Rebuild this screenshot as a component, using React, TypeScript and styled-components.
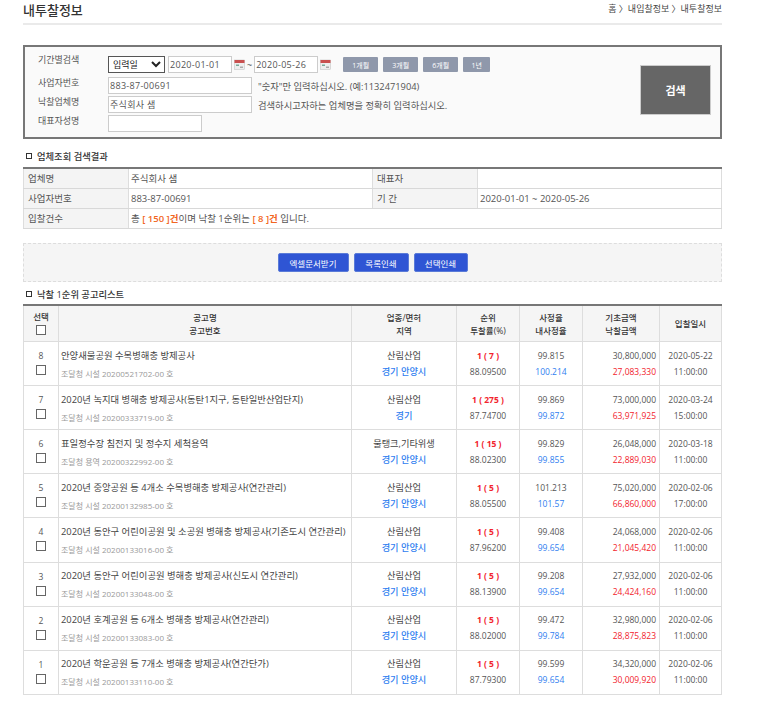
import React from "react";
import styled, { createGlobalStyle } from "styled-components";

const GlobalStyle = createGlobalStyle`
    html, body {
        margin: 0;
        padding: 0;
        background: #fff;
    }
    body {
        font-family: "Open Sans", "Noto Sans CJK KR", sans-serif;
        font-size: 9px;
        color: #555;
    }
`;

const Page = styled.div`
    width: 699px;
    margin-left: 23px;
    height: 707px;
    overflow: hidden;
`;

const Header = styled.header`
    display: flex;
    justify-content: space-between;
    align-items: flex-start;
    height: 23px;
    border-bottom: 2px solid #eaeaea;
`;

const Title = styled.h1`
    margin: 0;
    padding-top: 1px;
    font-size: 13px;
    line-height: 18px;
    font-weight: 500;
    color: #333;
`;

const Crumbs = styled.div`
    font-size: 9px;
    line-height: 18px;
    color: #444;
`;

const SearchBox = styled.form`
    display: flex;
    justify-content: space-between;
    height: 94px;
    box-sizing: border-box;
    margin-top: 20px;
    border: 2px solid #777;
    background: #fafafa;
    padding: 6px 9px 0 13px;
`;

const SearchFields = styled.div`
    display: grid;
    grid-template-columns: 70px 1fr;
    grid-template-rows: 23px 19px 19px 19px;
    align-items: center;
`;

const FieldLabel = styled.label`
    font-size: 9px;
    color: #555;
    margin-bottom: 7px;

    &:first-child {
        margin-bottom: 11px;
    }
`;

const FieldRow = styled.div`
    display: flex;
    align-items: center;
    gap: 6px;
    font-size: 9.3px;
    color: #555;
`;

const PeriodRow = styled(FieldRow)`
    gap: 3px;
`;

const Select = styled.select`
    width: 57px;
    height: 17px;
    padding: 0;
    font-family: inherit;
    font-size: 9px;
    color: #222;
    background: #fff;
    border: 1px solid #555;
`;

const TextInput = styled.input<{ $w: number }>`
    width: ${(p) => p.$w}px;
    height: 17px;
    box-sizing: border-box;
    padding: 0 1px;
    font-family: inherit;
    font-size: 9px;
    letter-spacing: 0.3px;
    color: #555;
    background: #fff;
    border: 1px solid #ccc;
`;

const DateGroup = styled.div`
    display: flex;
    align-items: center;
    gap: 2px;
    font-size: 9px;
`;

const PeriodButtons = styled.div`
    display: flex;
    gap: 5px;
    margin-left: 9px;
`;

const PeriodButton = styled.button<{ $w: number }>`
    width: ${(p) => p.$w}px;
    height: 15px;
    padding: 0;
    border: 0;
    border-radius: 1px;
    background: #8f98ab;
    color: #fff;
    font-family: inherit;
    font-size: 7px;
`;

const SearchButton = styled.button`
    width: 71px;
    height: 50px;
    margin-top: 12px;
    padding: 0;
    border: 1px solid #ccc;
    background: #666;
    color: #fff;
    font-family: inherit;
    font-size: 11px;
    font-weight: 700;
`;

const SectionTitle = styled.h2<{ $top: number }>`
    display: flex;
    align-items: center;
    gap: 5px;
    margin: ${(p) => p.$top}px 0 0 3px;
    height: 13px;
    font-size: 9.3px;
    font-weight: 500;
    color: #333;

    &::before {
        content: "";
        width: 4px;
        height: 4px;
        border: 1px solid #333;
        background: #fff;
    }
`;

const InfoTable = styled.table`
    width: 699px;
    height: 62px;
    margin-top: 5px;
    table-layout: fixed;
    border-collapse: collapse;
    border-top: 2px solid #777;
    border-left: 1px solid #ddd;
    border-right: 1px solid #ddd;
    font-size: 9.5px;
    line-height: 12px;

    th, td {
        height: 19px;
        padding: 0 2px;
        border-bottom: 1px solid #d8d8d8;
        border-right: 1px solid #ddd;
        text-align: left;
        font-weight: 400;
        color: #555;
    }
    th {
        padding: 0 4px;
        background: #f4f4f4;
    }
`;

const Hot = styled.span`
    color: #f26522;
    font-weight: 600;
`;

const ButtonBar = styled.div`
    display: flex;
    justify-content: center;
    gap: 5px;
    height: 39px;
    box-sizing: border-box;
    margin-top: 14px;
    padding-top: 9px;
    border: 1px dashed #ddd;
    background: #f5f5f5;
`;

const BlueButton = styled.button<{ $w: number }>`
    width: ${(p) => p.$w}px;
    height: 19px;
    padding: 0;
    border: 1px solid #5a7bd8;
    border-radius: 2px;
    background: #2f55d4;
    color: #fff;
    font-family: inherit;
    font-size: 8.5px;
`;

const ListTable = styled.table`
    width: 699px;
    margin-top: 4px;
    table-layout: fixed;
    border-collapse: collapse;
    border-top: 2px solid #777;
    border-left: 1px solid #ddd;
    border-bottom: 1px solid #ddd;
    font-size: 8.5px;
    line-height: 15px;

    th, td {
        border-right: 1px solid #ddd;
        border-bottom: 1px solid #ddd;
        padding: 0;
        text-align: center;
    }
    th {
        height: 35px;
        background: #f5f5f5;
        font-weight: 500;
        line-height: 13px;
        color: #333;
    }
    td {
        height: 43.12px;
        color: #555;
    }
`;

const Check = styled.input.attrs({ type: "checkbox" })`
    display: block;
    width: 10px;
    height: 10px;
    margin: 2px auto 0;
    appearance: none;
    box-sizing: border-box;
    background: #fff;
    border: 1px solid #666;
`;

const SelectCell = styled.td`
    && {
        padding-bottom: 4px;
        height: 39.12px;
    }
`;

const SelectHead = styled.th`
    && {
        padding-bottom: 3px;
        height: 32px;
    }
`;

const NameCell = styled.td`
    && {
        text-align: left;
        padding-left: 2px;
        padding-bottom: 1px;
        height: 42.12px;
    }
`;

const NoticeName = styled.div`
    font-size: 9.35px;
    line-height: 17px;
    color: #444;
    white-space: nowrap;
`;

const NoticeNo = styled.div`
    margin-top: 3px;
    font-size: 8px;
    line-height: 13px;
    color: #999;
`;

const Line = styled.div<{ $c?: string; $weight?: number }>`
    color: ${(p) => p.$c || "#555"};
    font-weight: ${(p) => p.$weight || 400};
    line-height: 16px;
`;

const AreaLine = styled(Line)`
    font-size: 9.2px;
`;

const MoneyCell = styled.td`
    && {
        text-align: right;
        padding-right: 3px;
    }
`;

const CalendarIcon = () => (
    <svg width="11" height="11" viewBox="0 0 11 11">
        <rect x="0.5" y="1" width="10" height="9.5" fill="#eee" stroke="#bbb" strokeWidth="0.5" />
        <rect x="0.5" y="1" width="10" height="3" fill="#c9504f" />
        <rect x="2" y="5.5" width="3" height="1.5" fill="#7a9" />
        <rect x="6" y="7.5" width="3" height="1.5" fill="#aaa" />
    </svg>
);

const rows = [
    ["8", "안양새물공원 수목병해충 방제공사", "조달청 시설 20200521702-00 호", "산림산업", "경기 안양시", "1 ( 7 )", "88.09500", "99.815", "100.214", "30,800,000", "27,083,330", "2020-05-22", "11:00:00"],
    ["7", "2020년 녹지대 병해충 방제공사(동탄1지구, 동탄일반산업단지)", "조달청 시설 20200333719-00 호", "산림산업", "경기", "1 ( 275 )", "87.74700", "99.869", "99.872", "73,000,000", "63,971,925", "2020-03-24", "15:00:00"],
    ["6", "표일정수장 침전지 및 정수지 세척용역", "조달청 용역 20200322992-00 호", "물탱크,기타위생", "경기 안양시", "1 ( 15 )", "88.02300", "99.829", "99.855", "26,048,000", "22,889,030", "2020-03-18", "11:00:00"],
    ["5", "2020년 중앙공원 등 4개소 수목병해충 방제공사(연간관리)", "조달청 시설 20200132985-00 호", "산림산업", "경기 안양시", "1 ( 5 )", "88.05500", "101.213", "101.57", "75,020,000", "66,860,000", "2020-02-06", "17:00:00"],
    ["4", "2020년 동안구 어린이공원 및 소공원 병해충 방제공사(기존도시 연간관리)", "조달청 시설 20200133016-00 호", "산림산업", "경기 안양시", "1 ( 5 )", "87.96200", "99.408", "99.654", "24,068,000", "21,045,420", "2020-02-06", "11:00:00"],
    ["3", "2020년 동안구 어린이공원 병해충 방제공사(신도시 연간관리)", "조달청 시설 20200133048-00 호", "산림산업", "경기 안양시", "1 ( 5 )", "88.13900", "99.208", "99.654", "27,932,000", "24,424,160", "2020-02-06", "11:00:00"],
    ["2", "2020년 호계공원 등 6개소 병해충 방제공사(연간관리)", "조달청 시설 20200133083-00 호", "산림산업", "경기 안양시", "1 ( 5 )", "88.02000", "99.472", "99.784", "32,980,000", "28,875,823", "2020-02-06", "11:00:00"],
    ["1", "2020년 학운공원 등 7개소 병해충 방제공사(연간단가)", "조달청 시설 20200133110-00 호", "산림산업", "경기 안양시", "1 ( 5 )", "87.79300", "99.599", "99.654", "34,320,000", "30,009,920", "2020-02-06", "11:00:00"],
];

const App = () => {
    return (
        <Page>
            <GlobalStyle />
            <Header>
                <Title>내투찰정보</Title>
                <Crumbs>홈 〉내입찰정보 〉내투찰정보</Crumbs>
            </Header>

            <SearchBox>
                <SearchFields>
                    <FieldLabel>기간별검색</FieldLabel>
                    <PeriodRow>
                        <Select defaultValue="입력일">
                            <option>입력일</option>
                        </Select>
                        <DateGroup>
                            <TextInput $w={64} defaultValue="2020-01-01" />
                            <CalendarIcon />
                            <span>~</span>
                            <TextInput $w={64} defaultValue="2020-05-26" />
                            <CalendarIcon />
                        </DateGroup>
                        <PeriodButtons>
                            <PeriodButton type="button" $w={35}>1개월</PeriodButton>
                            <PeriodButton type="button" $w={35}>3개월</PeriodButton>
                            <PeriodButton type="button" $w={35}>6개월</PeriodButton>
                            <PeriodButton type="button" $w={27}>1년</PeriodButton>
                        </PeriodButtons>
                    </PeriodRow>
                    <FieldLabel>사업자번호</FieldLabel>
                    <FieldRow>
                        <TextInput $w={144} defaultValue="883-87-00691" />
                        <span>"숫자"만 입력하십시오. (예:1132471904)</span>
                    </FieldRow>
                    <FieldLabel>낙찰업체명</FieldLabel>
                    <FieldRow>
                        <TextInput $w={144} defaultValue="주식회사 샘" />
                        <span>검색하시고자하는 업체명을 정확히 입력하십시오.</span>
                    </FieldRow>
                    <FieldLabel>대표자성명</FieldLabel>
                    <FieldRow>
                        <TextInput $w={94} />
                    </FieldRow>
                </SearchFields>
                <SearchButton type="button">검색</SearchButton>
            </SearchBox>

            <SectionTitle $top={10}>업체조회 검색결과</SectionTitle>
            <InfoTable>
                <colgroup>
                    <col width="105" />
                    <col width="244" />
                    <col width="105" />
                    <col />
                </colgroup>
                <tbody>
                    <tr>
                        <th>업체명</th>
                        <td>주식회사 샘</td>
                        <th>대표자</th>
                        <td></td>
                    </tr>
                    <tr>
                        <th>사업자번호</th>
                        <td>883-87-00691</td>
                        <th>기 간</th>
                        <td>2020-01-01 ~ 2020-05-26</td>
                    </tr>
                    <tr>
                        <th>입찰건수</th>
                        <td colSpan={3}>
                            총 <Hot>[ 150 ]건</Hot>이며 낙찰 1순위는 <Hot>[ 8 ]건</Hot> 입니다.
                        </td>
                    </tr>
                </tbody>
            </InfoTable>

            <ButtonBar>
                <BlueButton type="button" $w={71}>엑셀문서받기</BlueButton>
                <BlueButton type="button" $w={55}>목록인쇄</BlueButton>
                <BlueButton type="button" $w={54}>선택인쇄</BlueButton>
            </ButtonBar>

            <SectionTitle $top={5}>낙찰 1순위 공고리스트</SectionTitle>
            <ListTable>
                <colgroup>
                    <col width="35" />
                    <col width="293" />
                    <col width="105" />
                    <col width="63" />
                    <col width="63" />
                    <col width="77" />
                    <col />
                </colgroup>
                <thead>
                    <tr>
                        <SelectHead>
                            선택
                            <Check />
                        </SelectHead>
                        <th>공고명<br />공고번호</th>
                        <th>업종/면허<br />지역</th>
                        <th>순위<br />투찰률(%)</th>
                        <th>사정율<br />내사정율</th>
                        <th>기초금액<br />낙찰금액</th>
                        <th>입찰일시</th>
                    </tr>
                </thead>
                <tbody>
                    {rows.map((r) => (
                        <tr key={r[0]}>
                            <SelectCell>
                                {r[0]}
                                <Check />
                            </SelectCell>
                            <NameCell>
                                <NoticeName>{r[1]}</NoticeName>
                                <NoticeNo>{r[2]}</NoticeNo>
                            </NameCell>
                            <td>
                                <AreaLine $c="#444">{r[3]}</AreaLine>
                                <AreaLine $c="#2f80f0" $weight={500}>{r[4]}</AreaLine>
                            </td>
                            <td>
                                <Line $c="#f2232d" $weight={700}>{r[5]}</Line>
                                <Line>{r[6]}</Line>
                            </td>
                            <td>
                                <Line>{r[7]}</Line>
                                <Line $c="#2f80f0">{r[8]}</Line>
                            </td>
                            <MoneyCell>
                                <Line>{r[9]}</Line>
                                <Line $c="#f2232d">{r[10]}</Line>
                            </MoneyCell>
                            <td>
                                <Line>{r[11]}</Line>
                                <Line>{r[12]}</Line>
                            </td>
                        </tr>
                    ))}
                </tbody>
            </ListTable>
        </Page>
    );
};

export default App;
